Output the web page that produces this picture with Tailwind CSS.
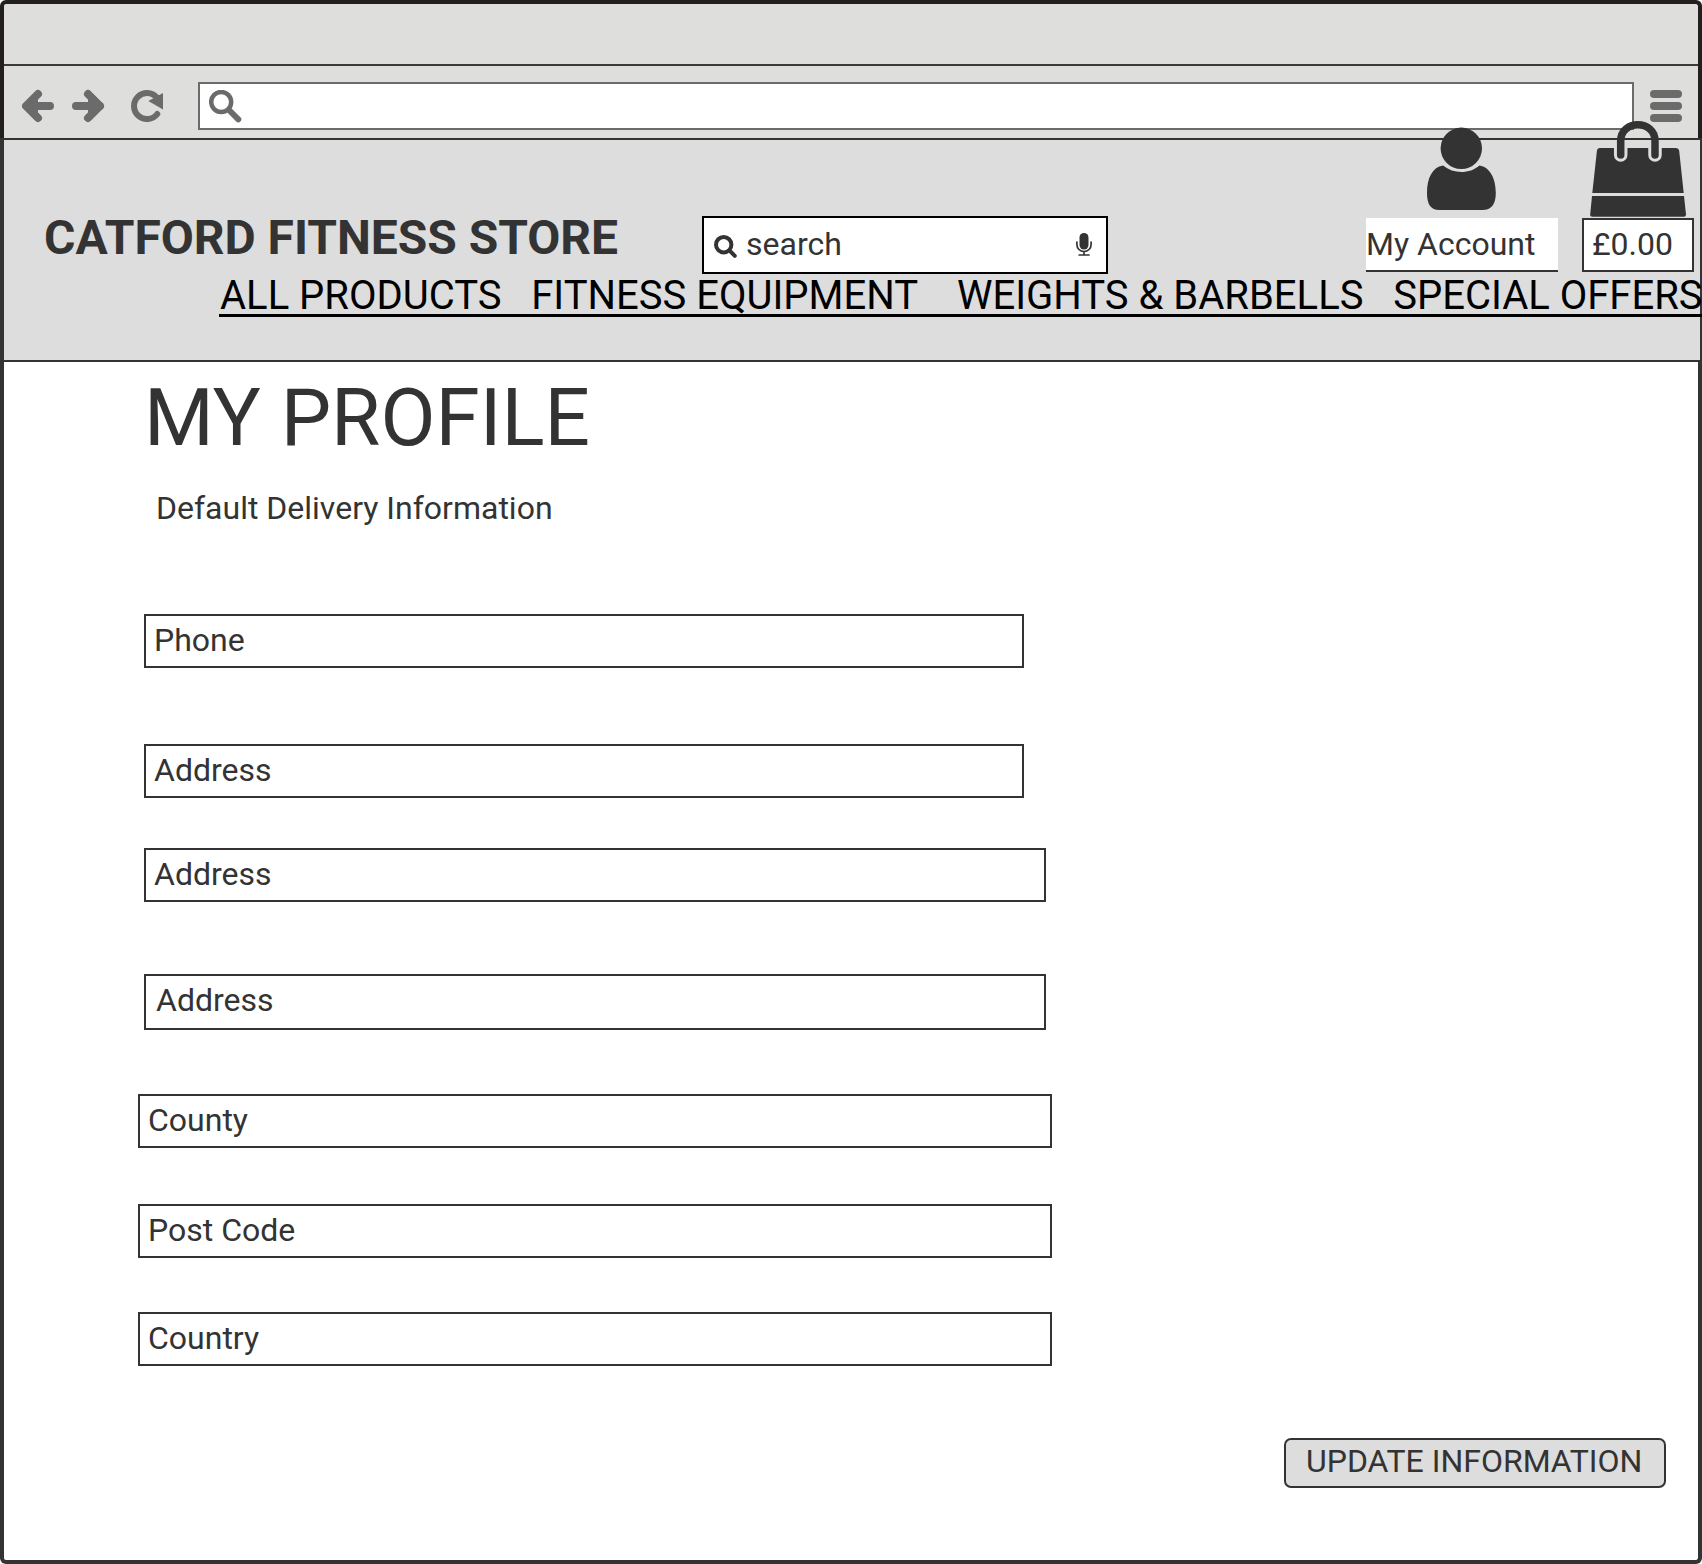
<!DOCTYPE html>
<html lang="en">
<head>
<meta charset="utf-8">
<title>Catford Fitness Store - My Profile</title>
<script src="https://cdn.jsdelivr.net/npm/@tailwindcss/browser@4"></script>
</head>
<body class="bg-white">
<div class="relative flex h-[1564px] w-[1702px] flex-col overflow-hidden bg-white font-['Roboto',sans-serif] text-[32px] leading-[38px] text-[#333]">

  <!-- Browser chrome -->
  <div class="h-[138px] shrink-0 rounded-t-[6px] border-x-4 border-t-4 border-[#231f20] bg-[#dededd]">
    <div class="h-[62px] border-b-2 border-[#3c3a3b]"></div>
    <div class="flex h-[72px] items-start pt-4 pl-[18px]">
      <svg class="mt-[7px] h-[34px] w-[144px]" viewBox="0 0 144 34" fill="none" stroke="#6b6b6b">
        <g fill="#6b6b6b" stroke-width="8" stroke-linecap="round" stroke-linejoin="round">
          <path d="M15.800 17H28M16 5L4 17L16 29M5 17H28"/>
        </g>
        <path d="M12 12V22L7 17Z" fill="#6b6b6b"/>
        <g stroke-width="8" stroke-linecap="round" stroke-linejoin="round">
          <path d="M54 17H78M66 5L78 17L66 29" fill="#6b6b6b"/>
        </g>
        <path d="M135.300 25A13 13 0 1 1 134.800 8.500" stroke-width="6" stroke-linecap="round"/>
        <path d="M126.300 12L141 4V20.500Z" fill="#6b6b6b" stroke="none"/>
      </svg>
      <div class="ml-[32px] h-12 w-[1436px] border-2 border-[#6b6b6b] bg-white pt-[6px] pl-[9px]">
        <svg class="h-[33px] w-[33px]" viewBox="0 0 33 33" fill="none" stroke="#6b6b6b"><circle cx="12.200" cy="12" r="10" stroke-width="4.500"/><path d="M20.500 20.500L29.300 29.300" stroke-width="6" stroke-linecap="round"/></svg>
      </div>
      <div class="mt-2 ml-4 flex flex-col gap-1">
        <i class="block h-2 w-8 rounded-full bg-[#6b6b6b]"></i>
        <i class="block h-2 w-8 rounded-full bg-[#6b6b6b]"></i>
        <i class="block h-2 w-8 rounded-full bg-[#6b6b6b]"></i>
      </div>
    </div>
  </div>

  <!-- Store header -->
  <header class="h-[224px] shrink-0 border-y-2 border-r-2 border-l-4 border-[#333] bg-[#ddd]">
    <div class="flex h-[134px] items-end pl-10">
      <h1 class="mb-2 w-[658px] text-[48px] leading-[56px] font-bold tracking-[-0.03px]">CATFORD FITNESS STORE</h1>
      <div class="flex h-[58px] w-[406px] border-2 border-black bg-white pt-[7px] pl-[10px]">
        <svg class="mt-[10px] h-6 w-6" viewBox="0 0 24 24" fill="none" stroke="#333"><circle cx="9.700" cy="9.700" r="7.700" stroke-width="4"/><path d="M15.500 15.500L20.800 20.800" stroke-width="4" stroke-linecap="round"/></svg>
        <span class="ml-[8px] w-[330px]">search</span>
        <svg class="mt-2 h-[23px] w-4 shrink-0" viewBox="0 0 16 23" fill="none" stroke="#333"><rect x="3.500" width="9" height="16.500" rx="4.500" fill="#333" stroke="none"/><path d="M.9 9V11.500A7.100 7.100 0 0 0 15.100 11.500V9M8 18.500V22M3.200 22H13" stroke-width="1.700" stroke-linecap="round"/></svg>
      </div>
      <a class="mb-[2px] ml-[258px] h-[54px] w-[192px] border-b-2 border-[#333] bg-white pt-[7px]">My Account</a>
      <a class="mb-[2px] ml-6 h-[54px] w-[112px] border-2 border-[#333] bg-white pt-[5px] pl-2">£0.00</a>
    </div>
    <nav class="-mr-[2px] ml-[215px] h-[43px] border-b-[3px] border-black pl-px text-[40px] leading-[43px] whitespace-pre text-black">ALL PRODUCTS   FITNESS EQUIPMENT    WEIGHTS &amp; BARBELLS   SPECIAL OFFERS</nav>
  </header>

  <!-- Account and basket icons overlap the browser bar -->
  <svg class="absolute top-[126px] left-[1425px] h-[86px] w-[72px]" viewBox="0 0 72 86">
    <path d="M18 39.500C7.500 41 2 52 2 67C2 78 5.500 84 14.500 84H57.500C66.500 84 70.800 78 70.800 67C70.800 52 64.500 41 54.500 39.500C44.500 48.200 28.500 48.200 18 39.500Z" fill="#333"/>
    <circle cx="36.300" cy="22.300" r="20.700" fill="#333"/>
  </svg>
  <svg class="absolute top-[120px] left-[1588px] h-[100px] w-[100px]" viewBox="0 0 100 100" fill="none">
    <path d="M12 28H87.500Q90.800 28 91.200 31L95.700 73H4.300L8.900 31Q9.200 28 12 28Z" fill="#333"/>
    <path d="M4 76H96L98 94.500Q98 96.700 95.700 96.700H4.500Q2 96.700 2.200 94.500Z" fill="#333"/>
    <path d="M32.700 27V35M67 27V35" stroke="#ddd" stroke-width="13.500" stroke-linecap="round"/>
    <path d="M32.700 35V21C32.700 -.7 67 -.7 67 21V35" stroke="#333" stroke-width="7.500" stroke-linecap="round"/>
  </svg>

  <!-- Profile form -->
  <main class="flex flex-1 flex-col items-start rounded-b-[6px] border-x-4 border-b-4 border-[#333] pl-[140px]">
    <h2 class="mt-[9px] text-[80px] leading-[94px]">MY PROFILE</h2>
    <p class="mt-[24px] ml-[12px]">Default Delivery Information</p>
    <div class="mt-[87px] h-[54px] w-[880px] border-2 border-[#333] pt-[5px] pl-2">Phone</div>
    <div class="mt-[76px] h-[54px] w-[880px] border-2 border-[#333] pt-[5px] pl-2">Address</div>
    <div class="mt-[50px] h-[54px] w-[902px] border-2 border-[#333] pt-[5px] pl-2">Address</div>
    <div class="mt-[72px] h-[56px] w-[902px] border-2 border-[#333] pt-[5px] pl-[10px]">Address</div>
    <div class="mt-16 -ml-[6px] h-[54px] w-[914px] border-2 border-[#333] pt-[5px] pl-2">County</div>
    <div class="mt-14 -ml-[6px] h-[54px] w-[914px] border-2 border-[#333] pt-[5px] pl-2">Post Code</div>
    <div class="mt-[54px] -ml-[6px] h-[54px] w-[914px] border-2 border-[#333] pt-[5px] pl-2">Country</div>
    <button class="mt-[72px] mr-8 flex h-[50px] w-[382px] self-end rounded-[7px] border-2 border-[#333] bg-[#ddd] pt-[2px] pl-[20px] whitespace-nowrap">UPDATE INFORMATION</button>
  </main>
</div>
</body>
</html>
